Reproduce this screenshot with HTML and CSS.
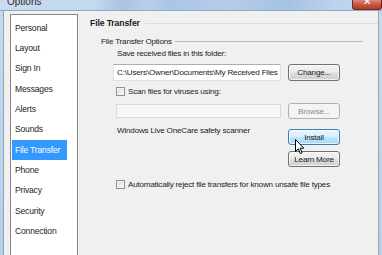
FILE: index.html
```html
<!DOCTYPE html>
<html>
<head>
<meta charset="utf-8">
<link rel="stylesheet" href="styles.css">
</head>
<body>
<div class="window">
  <div class="titlebar">
    <span class="title">Options</span>
    <span class="close"><span class="x">✕</span></span>
  </div>
  <div class="frame">
    <ul class="nav">
      <li>Personal</li>
      <li>Layout</li>
      <li>Sign In</li>
      <li>Messages</li>
      <li>Alerts</li>
      <li>Sounds</li>
      <li class="selected">File Transfer</li>
      <li>Phone</li>
      <li>Privacy</li>
      <li>Security</li>
      <li>Connection</li>
    </ul>
    <div class="content">
      <div class="heading"><span>File Transfer</span><i class="rule"></i></div>
      <div class="group"><span>File Transfer Options</span><i class="rule"></i></div>
      <div class="inner">
        <div class="label save">Save received files in this folder:</div>
        <div class="row row1">
          <div class="field"><span>C:\Users\Owner\Documents\My Received Files</span></div>
          <div class="btn">Change...</div>
        </div>
        <div class="check check1"><i class="box"></i><span>Scan files for viruses using:</span></div>
        <div class="row row2">
          <div class="field disabled"></div>
          <div class="btn disabled">Browse...</div>
        </div>
        <div class="row row3">
          <div class="label scanner">Windows Live OneCare safety scanner</div>
          <div class="btncol">
            <div class="btn hover">Install</div>
            <div class="btn">Learn More</div>
            <svg class="cursor" width="10" height="16" viewBox="0 0 10 16">
              <path d="M0.5 0.5 L0.5 12.5 L3.3 9.8 L5.3 14.6 L7.1 13.8 L5.1 9.2 L8.8 9.2 Z" fill="#fff" stroke="#000" stroke-width="1" stroke-linejoin="round"/>
            </svg>
          </div>
        </div>
        <div class="check check2"><i class="box"></i><span>Automatically reject file transfers for known unsafe file types</span></div>
      </div>
    </div>
  </div>
</div>
</body>
</html>
```

FILE: styles.css
```css
* { box-sizing: border-box; }
html, body {
  margin: 0;
  padding: 0;
  width: 382px;
  height: 255px;
  overflow: hidden;
}
body {
  font-family: "Liberation Sans", Arial, sans-serif;
  font-size: 8.1px;
  letter-spacing: -0.2px;
  color: #1b1b1b;
}
.window {
  display: flex;
  flex-direction: column;
  width: 382px;
  height: 255px;
  background: linear-gradient(180deg, #c5daee, #b6cfe8);
}
.titlebar {
  height: 11px;
  flex: none;
  display: flex;
  justify-content: space-between;
  align-items: flex-start;
  overflow: hidden;
  background: linear-gradient(90deg, #c9dcef 0%, #c3d8ee 25%, #a9c3e0 32%, #b8d0ea 38%, #aac6e6 45%, #b4cde9 60%, #a6c2e3 75%, #bcd3ec 88%, #c6dbef 100%);
  border-bottom: 1px solid #93a9c3;
}
.title {
  font-family: "Liberation Sans", Arial, sans-serif;
  font-size: 10px;
  line-height: 10px;
  margin-top: -3px;
  padding-left: 7px;
  color: #2a2a2a;
  letter-spacing: 0;
}
.close {
  width: 30px;
  height: 10px;
  background: linear-gradient(180deg, #d98b7c 0%, #c85a45 45%, #b23a24 100%);
  border: 1px solid #6e2a20;
  border-top: none;
  border-radius: 0 0 3px 3px;
  display: flex;
  justify-content: center;
  overflow: hidden;
}
.close .x {
  color: #fff;
  font-size: 10px;
  line-height: 10px;
  margin-top: -3px;
  font-family: "DejaVu Sans", sans-serif;
  font-weight: bold;
}
.frame {
  flex: 1;
  display: flex;
  margin: 0 3px 0 3px;
  border-left: 1px solid #8ea3ba;
  border-right: 1px solid #9aa8b6;
  background: #f0f0f0;
  padding: 3px 0 0 6px;
  gap: 12px;
  min-height: 0;
}
.nav {
  list-style: none;
  margin: 0;
  padding: 2.85px 0 0 0;
  width: 68px;
  flex: none;
  background: #fff;
  border: 1px solid #828790;
  border-bottom: none;
  font-size: 8.6px;
}
.nav li {
  height: 20.3px;
  line-height: 20.3px;
  width: 55px;
  margin-left: 1px;
  padding-left: 3px;
  white-space: nowrap;
  color: #1e1e1e;
}
.nav li.selected {
  background: #3399ff;
  color: #fff;
}
.content {
  flex: 1;
  display: flex;
  flex-direction: column;
  padding-right: 15px;
  min-width: 0;
}
.heading {
  display: flex;
  align-items: center;
  height: 12px;
  margin-top: 3px;
  margin-right: -15px;
  font-weight: bold;
  font-size: 8.6px;
  letter-spacing: -0.1px;
}
.rule {
  flex: 1;
  height: 1px;
  background: #d8dde2;
  margin-left: 5px;
}
.group {
  display: flex;
  align-items: center;
  height: 12px;
  margin-top: 6px;
  margin-left: 11px;
}
.group .rule {
  background: #b9bec3;
  margin-left: 3px;
}
.inner {
  display: flex;
  flex-direction: column;
  margin-left: 23px;
}
.label {
  height: 10px;
  line-height: 10px;
  white-space: nowrap;
}
.save {
  margin-top: 2px;
  padding-left: 4px;
}
.row {
  display: flex;
  align-items: center;
}
.row1 {
  margin-top: 5px;
  height: 17px;
}
.field {
  width: 168px;
  height: 17px;
  background: #fff;
  border: 1px solid #dbdfe6;
  border-top-color: #abadb3;
  border-left-color: #e2e3ea;
  overflow: hidden;
  white-space: nowrap;
  line-height: 15px;
  padding-left: 3px;
}
.field.disabled {
  width: 165px;
  height: 14px;
  margin-left: 3px;
  background: #f7f7f7;
  border-color: #d9d9d9;
}
.btn {
  width: 52px;
  height: 17px;
  margin-left: 7px;
  border: 1px solid #707070;
  border-radius: 3px;
  background: linear-gradient(180deg, #f2f2f2 0%, #ebebeb 48%, #dddddd 52%, #cfcfcf 100%);
  box-shadow: inset 0 0 0 1px rgba(255,255,255,0.7);
  display: flex;
  align-items: center;
  justify-content: center;
  white-space: nowrap;
  color: #1b1b1b;
}
.btn.disabled {
  height: 16px;
  border-color: #adb2b5;
  background: #f4f4f4;
  color: #8a8a8a;
  box-shadow: none;
}
.btn.hover {
  border-color: #3c7fb1;
  background: linear-gradient(180deg, #eaf6fd 0%, #d9f0fc 48%, #bee6fd 52%, #a7d9f5 100%);
}
.check {
  display: flex;
  align-items: center;
  height: 10px;
  padding-left: 3px;
  white-space: nowrap;
}
.box {
  width: 9px;
  height: 9px;
  flex: none;
  border: 1px solid #8f8f8f;
  background: linear-gradient(135deg, #dcdcdc, #f6f6f6);
  box-shadow: inset 0 0 0 1px #f4f4f4;
  margin-right: 3px;
}
.check1 {
  margin-top: 5px;
}
.row2 {
  margin-top: 7px;
  height: 16px;
}
.row3 {
  margin-top: 7px;
  align-items: flex-start;
}
.scanner {
  width: 175px;
  padding-left: 4px;
}
.btncol {
  position: relative;
  display: flex;
  flex-direction: column;
  gap: 6px;
  margin-top: 3px;
}
.btncol .btn {
  height: 16px;
  margin-left: 0;
}
.cursor {
  position: absolute;
  left: 7px;
  top: 10px;
}
.check2 {
  margin-top: 12px;
}
```
